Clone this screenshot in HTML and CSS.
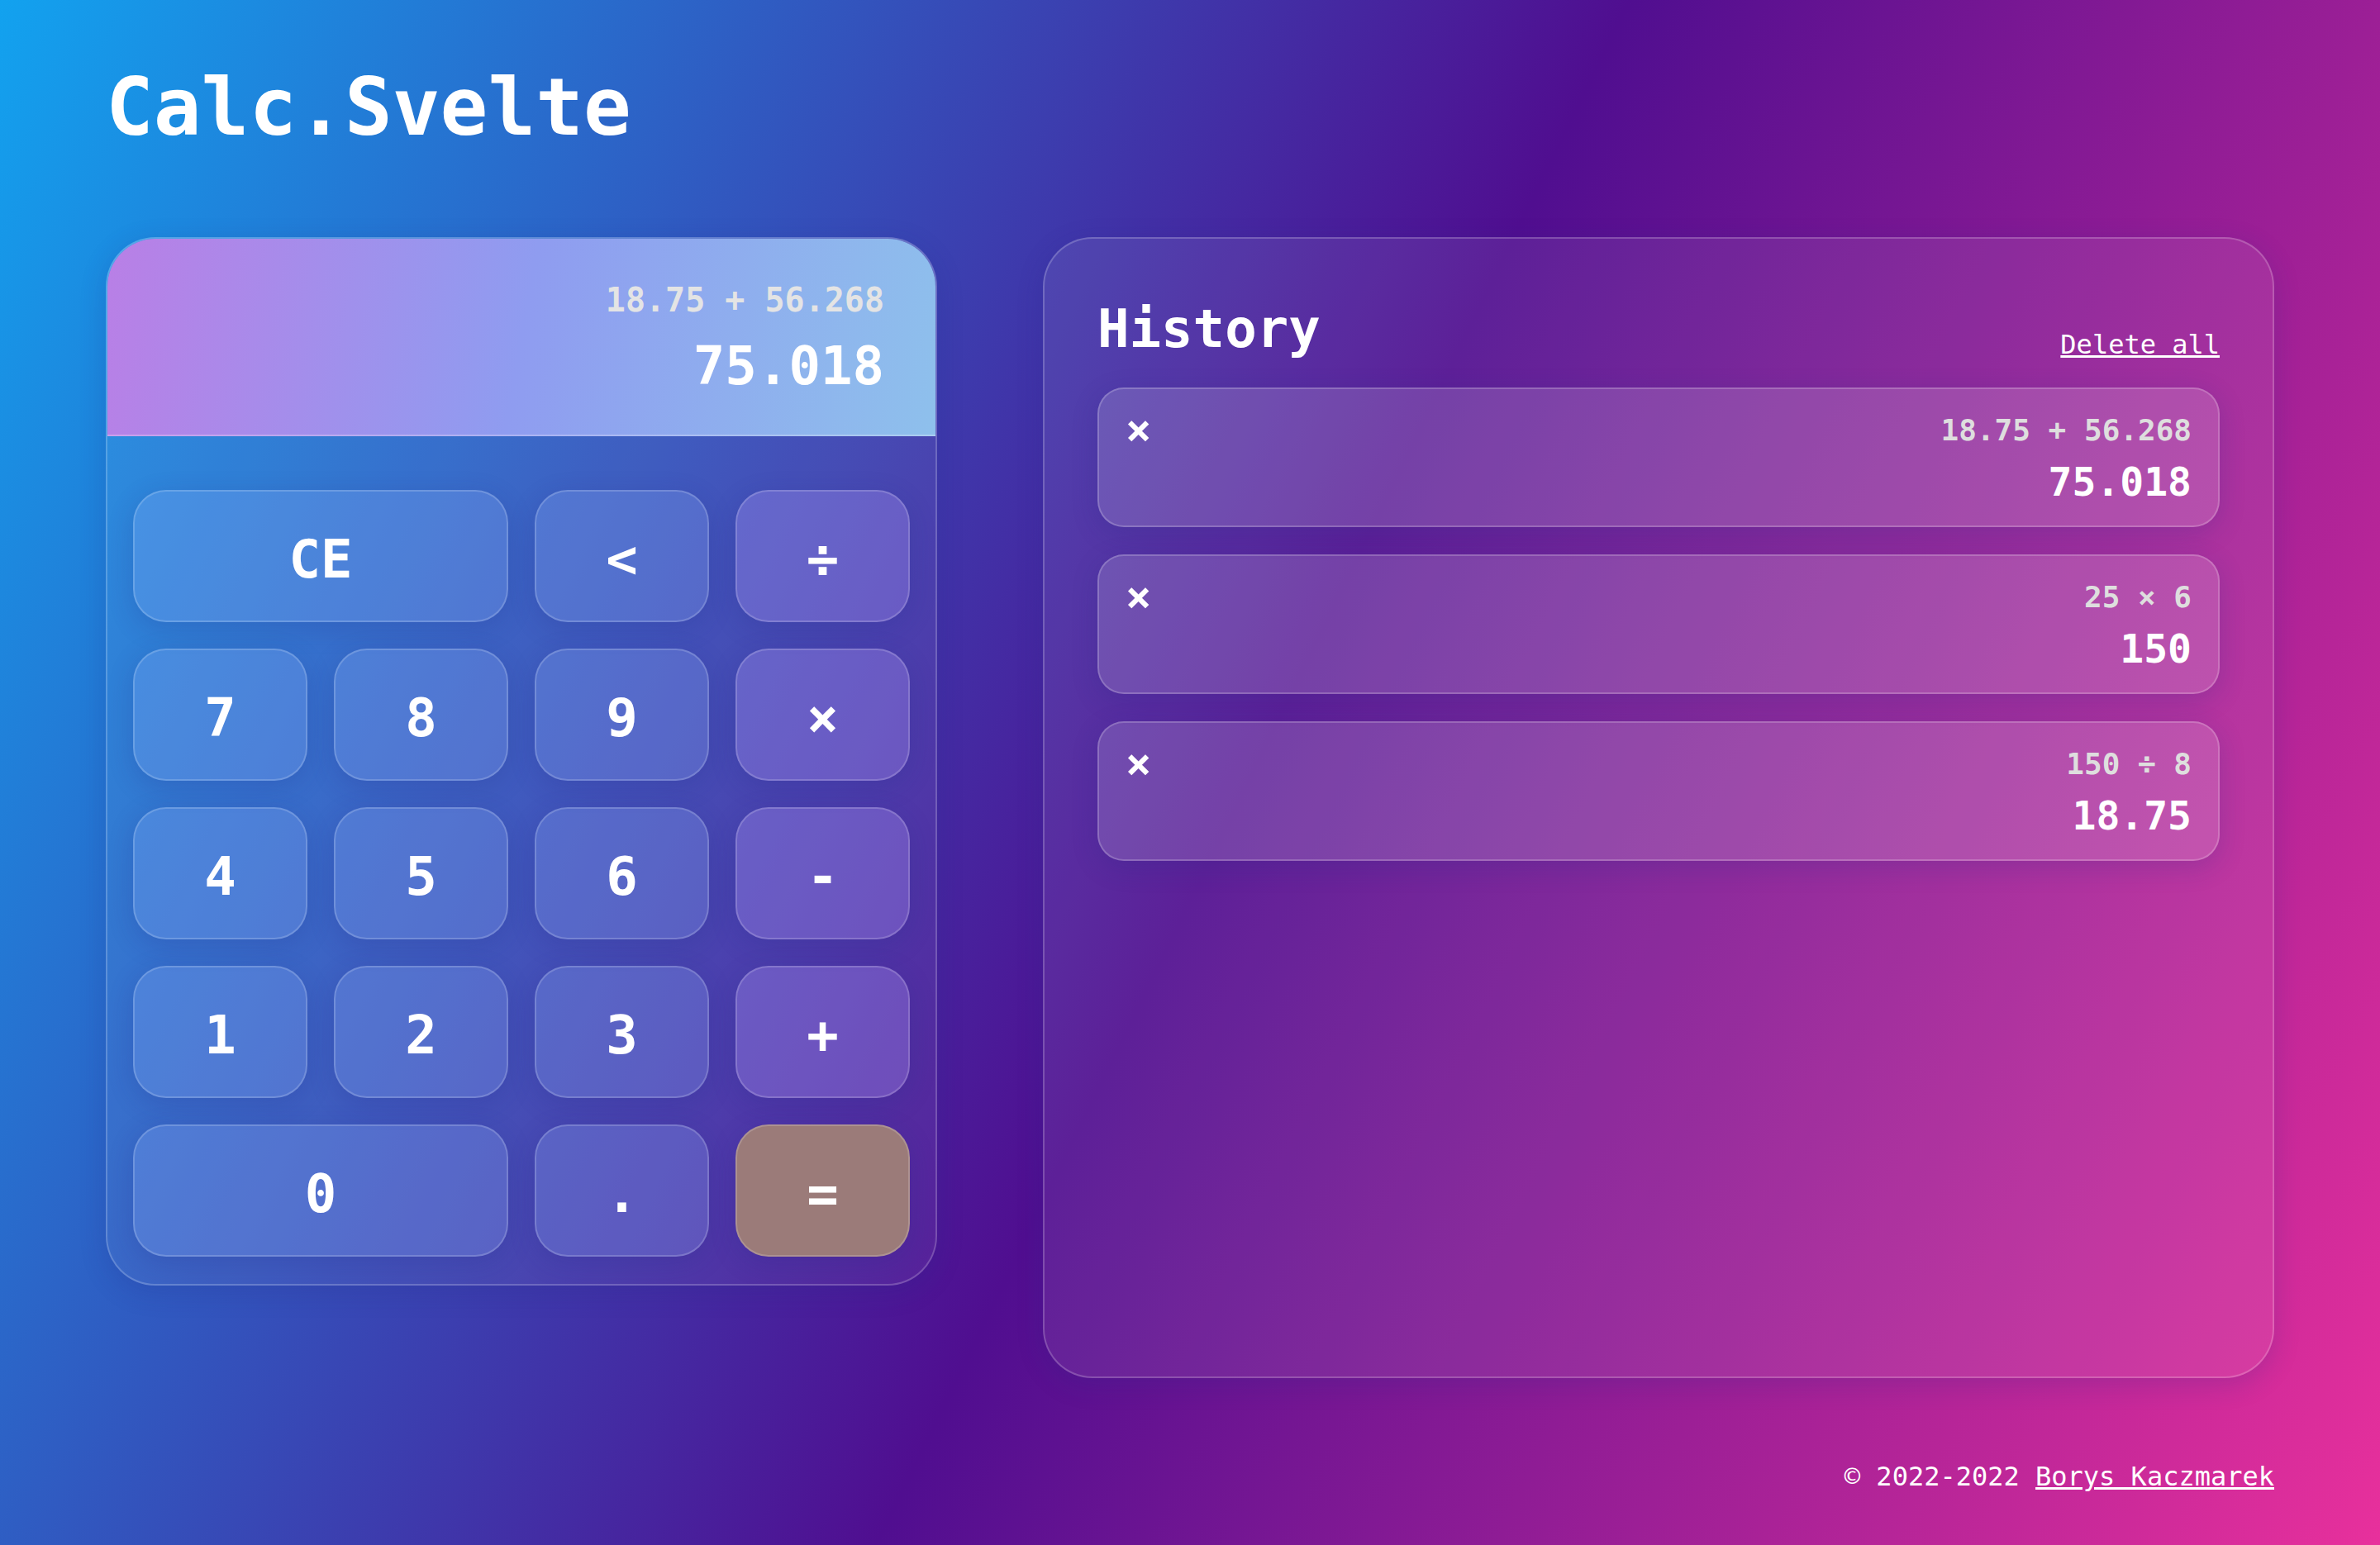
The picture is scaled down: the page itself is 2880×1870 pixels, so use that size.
FILE: index.html
```html
<!DOCTYPE html>
<html lang="en">
<head>
<meta charset="utf-8">
<title>Calc.Svelte</title>
<link rel="stylesheet" href="styles.css">
</head>
<body>
<div class="page">
  <h1 class="title">Calc.Svelte</h1>
  <main class="layout">
    <section class="calc">
      <div class="display">
        <div class="display-expr">18.75 + 56.268</div>
        <div class="display-result">75.018</div>
      </div>
      <div class="keys">
        <button class="key wide">CE</button>
        <button class="key">&lt;</button>
        <button class="key op">÷</button>
        <button class="key">7</button>
        <button class="key">8</button>
        <button class="key">9</button>
        <button class="key op">×</button>
        <button class="key">4</button>
        <button class="key">5</button>
        <button class="key">6</button>
        <button class="key op">-</button>
        <button class="key">1</button>
        <button class="key">2</button>
        <button class="key">3</button>
        <button class="key op">+</button>
        <button class="key wide">0</button>
        <button class="key">.</button>
        <button class="key eq">=</button>
      </div>
    </section>
    <section class="history">
      <div class="history-head">
        <h2 class="history-title">History</h2>
        <a class="delete-all" href="#">Delete all</a>
      </div>
      <div class="entries">
        <div class="entry">
          <div class="entry-top"><button class="del">×</button><span class="entry-expr">18.75 + 56.268</span></div>
          <div class="entry-res">75.018</div>
        </div>
        <div class="entry">
          <div class="entry-top"><button class="del">×</button><span class="entry-expr">25 × 6</span></div>
          <div class="entry-res">150</div>
        </div>
        <div class="entry">
          <div class="entry-top"><button class="del">×</button><span class="entry-expr">150 ÷ 8</span></div>
          <div class="entry-res">18.75</div>
        </div>
      </div>
    </section>
  </main>
  <footer class="footer">© 2022-2022 <a class="author" href="#">Borys Kaczmarek</a></footer>
</div>
</body>
</html>
```
FILE: styles.css
```css
html, body {
  margin: 0;
  height: 100%;
}

body {
  background: linear-gradient(116deg, #12a2ef 0%, #500e90 52%, #e8309c 100%);
  font-family: "DejaVu Sans Mono", "Liberation Mono", monospace;
  color: #fff;
  overflow: hidden;
}

.page {
  box-sizing: border-box;
  height: 1870px;
  padding: 73px 128px 0 128px;
}

.title {
  margin: 0 0 99px 0;
  font-size: 96px;
  line-height: 115px;
  font-weight: 700;
}

.layout {
  display: grid;
  grid-template-columns: 1006px 1fr;
  column-gap: 128px;
  align-items: start;
}

/* Calculator */
.calc {
  border: 2px solid rgba(255, 255, 255, 0.2);
  border-radius: 60px;
  background: rgba(255, 255, 255, 0.06);
  overflow: hidden;
  box-shadow: 0 8px 32px rgba(31, 38, 135, 0.2);
}

.display {
  background: linear-gradient(100deg, #b97fe6 0%, #8f9cf0 50%, #8ec0ec 100%);
  padding: 50px 62px 45px;
  text-align: right;
  border-bottom: 2px solid rgba(255, 255, 255, 0.25);
}

.display-expr {
  font-size: 40px;
  line-height: 48px;
  font-weight: 700;
  color: #e4e4e4;
}

.display-result {
  margin-top: 18px;
  font-size: 64px;
  line-height: 76px;
  font-weight: 700;
}

.keys {
  display: grid;
  grid-template-columns: repeat(4, 1fr);
  grid-auto-rows: 160px;
  gap: 32px;
  padding: 65px 31px 33px;
}

.key {
  font-family: inherit;
  font-size: 64px;
  font-weight: 700;
  line-height: 1;
  color: #fff;
  border: 2px solid rgba(255, 255, 255, 0.18);
  border-radius: 40px;
  background: rgba(150, 185, 255, 0.24);
  box-shadow: 0 8px 32px rgba(31, 38, 135, 0.2);
  padding: 8px 0 0 0;
}

.key.wide {
  grid-column: span 2;
}

.key.op {
  background: rgba(178, 157, 248, 0.3);
}

.key.eq {
  background: #9b7b79;
}

/* History */
.history {
  box-sizing: border-box;
  height: 1381px;
  border: 2px solid rgba(255, 255, 255, 0.2);
  border-radius: 60px;
  background: rgba(255, 255, 255, 0.08);
  padding: 71px 64px 64px;
  box-shadow: 0 8px 32px rgba(31, 38, 135, 0.2);
}

.history-head {
  display: flex;
  justify-content: space-between;
  align-items: flex-end;
  margin-bottom: 33px;
}

.history-title {
  margin: 0;
  font-size: 64px;
  line-height: 76px;
  font-weight: 700;
}

.delete-all {
  font-size: 32px;
  line-height: 38px;
  color: #fff;
  text-decoration: underline;
}

.entries {
  display: flex;
  flex-direction: column;
  gap: 33px;
}

.entry {
  border: 2px solid rgba(255, 255, 255, 0.2);
  border-radius: 32px;
  background: rgba(255, 255, 255, 0.15);
  padding: 28px 32px 24px;
  box-shadow: 0 8px 32px rgba(31, 38, 135, 0.2);
}

.entry-top {
  display: flex;
  justify-content: space-between;
  align-items: center;
  height: 43px;
}

.del {
  font-family: inherit;
  font-size: 52px;
  line-height: 43px;
  font-weight: 700;
  color: #fff;
  background: none;
  border: 0;
  padding: 0;
}

.entry-expr {
  font-size: 36px;
  line-height: 43px;
  font-weight: 700;
  color: #dedede;
}

.entry-res {
  margin-top: 13px;
  text-align: right;
  font-size: 48px;
  line-height: 57px;
  font-weight: 700;
}

/* Footer */
.footer {
  margin-top: 95px;
  text-align: right;
  font-size: 32px;
  line-height: 48px;
}

.author {
  color: #fff;
  text-decoration: underline;
}
```
